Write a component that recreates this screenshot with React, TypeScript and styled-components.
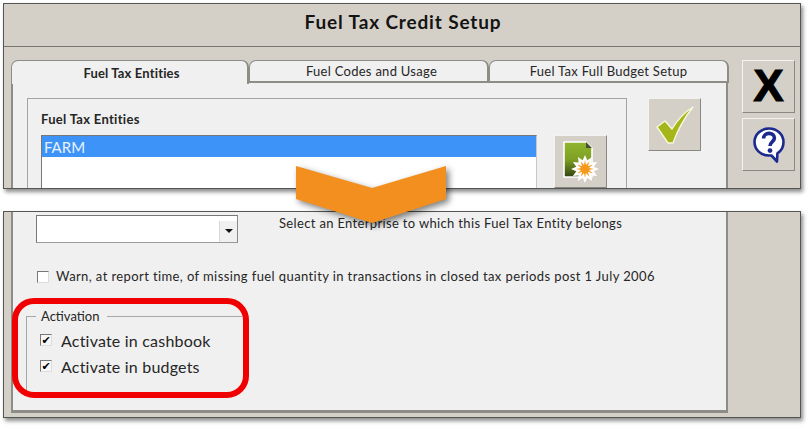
import * as React from "react";
import { createGlobalStyle, styled } from "styled-components";

const GlobalStyle = createGlobalStyle`
  html, body {
    margin: 0;
    padding: 0;
    background: #fff;
  }
  body {
    font-family: "Lato", "Open Sans", sans-serif;
    color: #262626;
  }
`;

// spiky burst used on the "new" document icon
const burst = (cx: number, cy: number, outer: number, inner: number, points: number) =>
  Array.from({ length: points * 2 }, (_, i) => {
    const r = i % 2 === 0 ? outer : inner;
    const a = (Math.PI * i) / points - Math.PI / 2;
    return `${(cx + r * Math.cos(a)).toFixed(1)},${(cy + r * Math.sin(a)).toFixed(1)}`;
  }).join(" ");

const CheckIcon = () => (
  <svg width="38" height="38" viewBox="0 0 38 38">
    <path
      d="M1 21 L9 15 L16 23 C22 13 29 6 37 1 C29 11 22 23 17 37 L12 37 Z"
      fill="#a5b61a"
      stroke="#f6f7dc"
      strokeWidth="1.4"
      strokeLinejoin="round"
    />
  </svg>
);

const NewDocIcon = () => (
  <svg width="36" height="42" viewBox="0 0 36 42">
    <defs>
      <linearGradient id="docFill" x1="0" y1="0" x2="0" y2="1">
        <stop offset="0" stopColor="#90b62e" />
        <stop offset="0.5" stopColor="#7f9f24" />
        <stop offset="1" stopColor="#2f4410" />
      </linearGradient>
    </defs>
    <path
      d="M1 1 H23 L29 7 V36 H1 Z"
      fill="url(#docFill)"
      stroke="#fff"
      strokeWidth="1.6"
      strokeLinejoin="round"
    />
    <path d="M23 1 L29 7 H23 Z" fill="#46512f" />
    <polygon points={burst(22, 28, 14, 9, 12)} fill="#fff" />
    <polygon points={burst(22, 28, 9, 4, 12)} fill="#f6981a" />
  </svg>
);

const HelpIcon = () => (
  <svg width="32" height="36" viewBox="0 0 32 36">
    <path
      d="M16 1.5 C7.8 1.5 1.5 7.6 1.5 15 C1.5 22.6 7.8 28.5 16 28.5 L18.5 28.5 L24 34.5 L24.4 26.4 C28.2 24 30.5 19.8 30.5 15 C30.5 7.6 24.2 1.5 16 1.5 Z"
      fill="#fff"
      stroke="#1c2a8e"
      strokeWidth="2.6"
      strokeLinejoin="round"
    />
    <path
      d="M10.6 11.5 C10.6 8.4 13 6.4 16 6.4 C19.2 6.4 21.4 8.2 21.4 11 C21.4 14.6 17 15 17 19"
      fill="none"
      stroke="#1c2a8e"
      strokeWidth="3.6"
    />
    <circle cx="17" cy="23.6" r="2.4" fill="#1c2a8e" />
  </svg>
);

export default function App() {
  return (
    <Page>
      <GlobalStyle />

      <TopPanel>
        <TitleBar>Fuel Tax Credit Setup</TitleBar>
        <TopBody>
          <TabArea>
            <TabStrip>
              <Tab $active $width={238} $shift={4}>Fuel Tax Entities</Tab>
              <Tab $width={240} $shift={6}>Fuel Codes and Usage</Tab>
              <Tab $width={240}>Fuel Tax Full Budget Setup</Tab>
            </TabStrip>
            <TabPage>
              <EntitiesGroup>
                <GroupTitle>Fuel Tax Entities</GroupTitle>
                <EntitiesRow>
                  <ListBox>
                    <ListItem>FARM</ListItem>
                  </ListBox>
                  <SquareButton>
                    <NewDocIcon />
                  </SquareButton>
                </EntitiesRow>
              </EntitiesGroup>
              <SquareButton>
                <CheckIcon />
              </SquareButton>
            </TabPage>
          </TabArea>
          <SideButtons>
            <SquareButton>
              <CloseGlyph>X</CloseGlyph>
            </SquareButton>
            <SquareButton>
              <HelpIcon />
            </SquareButton>
          </SideButtons>
        </TopBody>
      </TopPanel>

      <BottomPanel>
        <BottomPage>
          <EnterpriseRow>
            <ComboBox>
              <ComboArrow />
            </ComboBox>
            <HintText $spacing={0.34}>Select an Enterprise to which this Fuel Tax Entity belongs</HintText>
          </EnterpriseRow>
          <WarnRow>
            <CheckBox />
            <HintText $spacing={0.4}>
              Warn, at report time, of missing fuel quantity in transactions in closed tax periods post 1 July 2006
            </HintText>
          </WarnRow>
          <ActivationGroup>
            <ActivationLegend>Activation</ActivationLegend>
            <ActivationRow>
              <CheckBox $checked>✔</CheckBox>
              <ActivationLabel>Activate in cashbook</ActivationLabel>
            </ActivationRow>
            <ActivationRow>
              <CheckBox $checked>✔</CheckBox>
              <ActivationLabel>Activate in budgets</ActivationLabel>
            </ActivationRow>
            <RedHighlight />
          </ActivationGroup>
        </BottomPage>
      </BottomPanel>

      <ArrowMark viewBox="0 0 150 57" width="150" height="57">
        <polygon points="0,0 76,22 150,0 150,33 76,57 0,33" fill="#f28f1e" />
      </ArrowMark>
    </Page>
  );
}

const Page = styled.div`
  position: relative;
  width: 810px;
  height: 427px;
  padding: 3px 0 0 3px;
  box-sizing: border-box;
  overflow: hidden;
  display: flex;
  flex-direction: column;
  gap: 22px;
`;

const Panel = styled.section`
  width: 798px;
  box-sizing: border-box;
  border: 1px solid #555;
  background: #d4d0c8;
  box-shadow: 2px 3px 4px rgba(0, 0, 0, 0.45);
  overflow: hidden;
  flex: none;
`;

const TopPanel = styled(Panel)`
  height: 186px;
`;

const TitleBar = styled.header`
  height: 43px;
  box-sizing: border-box;
  padding: 0 0 7px 2px;
  border-bottom: 1px solid #77756f;
  display: flex;
  align-items: center;
  justify-content: center;
  font-size: 19px;
  font-weight: 700;
  letter-spacing: 0.85px;
  color: #141414;
`;

const TopBody = styled.div`
  display: flex;
  padding: 13px 0 0 7px;
  gap: 14px;
`;

const TabArea = styled.div`
  width: 717px;
  flex: none;
`;

const TabStrip = styled.div`
  display: flex;
  height: 23px;
  align-items: flex-start;
`;

const Tab = styled.div<{ $active?: boolean; $width: number; $shift?: number }>`
  width: ${(p) => p.$width}px;
  height: ${(p) => (p.$active ? 24 : 23)}px;
  flex: none;
  box-sizing: border-box;
  position: relative;
  z-index: ${(p) => (p.$active ? 1 : 0)};
  padding-left: ${(p) => p.$shift ?? 0}px;
  background: #f0f0f0;
  border: 1px solid #8e8c86;
  border-bottom: ${(p) => (p.$active ? "none" : "2px solid #8e8c86")};
  border-right-width: 2px;
  border-radius: 7px 7px 0 0;
  display: flex;
  align-items: center;
  justify-content: center;
  font-size: 13px;
  letter-spacing: ${(p) => (p.$active ? 0.15 : 0.28)}px;
  font-weight: ${(p) => (p.$active ? 700 : 400)};
`;

const TabPage = styled.div`
  background: #f0f0f0;
  height: 130px;
  box-sizing: border-box;
  border-left: 2px solid #8e8c86;
  border-right: 2px solid #8e8c86;
  padding: 15px 0 0 14px;
  display: flex;
  align-items: flex-start;
  gap: 21px;
`;

const EntitiesGroup = styled.div`
  width: 600px;
  height: 120px;
  flex: none;
  box-sizing: border-box;
  border: 1px solid #a4a4a4;
  padding: 12px 0 0 13px;
`;

const GroupTitle = styled.div`
  font-size: 13px;
  font-weight: 700;
  line-height: 17px;
  letter-spacing: 0.3px;
  margin-bottom: 7px;
`;

const EntitiesRow = styled.div`
  display: flex;
  align-items: flex-start;
  gap: 17px;
`;

const ListBox = styled.div`
  width: 496px;
  height: 60px;
  flex: none;
  box-sizing: border-box;
  background: #fff;
  border: 1px solid #77777a;
  border-right-color: #c8c8c8;
`;

const ListItem = styled.div`
  height: 21px;
  background: #3d93f7;
  color: #e8f2ff;
  font-size: 15px;
  line-height: 23px;
  padding-left: 2px;
`;

const SquareButton = styled.div`
  width: 53px;
  height: 53px;
  flex: none;
  box-sizing: border-box;
  background: #d4d0c8;
  border: 1px solid;
  border-color: #f4f3ef #8a8882 #8a8882 #f4f3ef;
  display: flex;
  align-items: center;
  justify-content: center;
`;

const SideButtons = styled.div`
  display: flex;
  flex-direction: column;
  gap: 5px;
`;

const CloseGlyph = styled.span`
  font-family: "Liberation Sans", sans-serif;
  font-size: 45px;
  font-weight: 700;
  line-height: 1;
  padding-bottom: 2px;
  color: #000;
  -webkit-text-stroke: 1.2px #000;
`;

const BottomPanel = styled(Panel)`
  height: 207px;
  padding-left: 7px;
`;

const BottomPage = styled.div`
  width: 717px;
  height: 201px;
  box-sizing: border-box;
  background: #f0f0f0;
  border-left: 2px solid #8e8c86;
  border-right: 2px solid #8e8c86;
  border-bottom: 3px solid #8e8c86;
  padding: 3px 0 0 23px;
`;

const EnterpriseRow = styled.div`
  display: flex;
  align-items: flex-start;
  gap: 41px;
`;

const ComboBox = styled.div`
  width: 202px;
  height: 28px;
  flex: none;
  box-sizing: border-box;
  background: #fff;
  border: 1px solid;
  border-color: #77777a #8a8a8a #9a9a9a #77777a;
  display: flex;
  justify-content: flex-end;
`;

const ComboArrow = styled.div`
  width: 18px;
  box-sizing: border-box;
  background: #f0f0f0;
  margin: 5px 0 0 0;
  border-left: 1px solid #d8d8d8;
  position: relative;

  &::after {
    content: "";
    position: absolute;
    left: 5px;
    top: 8px;
    border: 4px solid transparent;
    border-top: 4px solid #111;
    border-bottom: none;
  }
`;

const HintText = styled.span<{ $spacing: number }>`
  font-size: 13px;
  line-height: 17px;
  letter-spacing: ${(p) => p.$spacing}px;
  white-space: nowrap;
`;

const WarnRow = styled.div`
  display: flex;
  align-items: center;
  gap: 7px;
  margin: 25px 0 0 1px;
`;

const CheckBox = styled.span<{ $checked?: boolean }>`
  width: 12px;
  height: 12px;
  flex: none;
  box-sizing: border-box;
  background: ${(p) => (p.$checked ? "#f7f7f7" : "#fff")};
  border: 1px solid;
  border-color: #77777a #dcdcdc #dcdcdc #77777a;
  display: flex;
  align-items: center;
  justify-content: center;
  font-family: "DejaVu Sans", sans-serif;
  font-size: 11px;
  font-weight: 700;
  line-height: 1;
  color: #000;
`;

const ActivationGroup = styled.div`
  position: relative;
  width: 216px;
  height: 75px;
  box-sizing: border-box;
  margin: 31px 0 0 -10px;
  border-top: 1px solid #a8a8a8;
  border-left: 1px solid #a8a8a8;
  padding: 10px 0 0 13px;
`;

const ActivationLegend = styled.div`
  position: absolute;
  top: -9px;
  left: 9px;
  padding: 0 8px 0 5px;
  background: #f0f0f0;
  font-size: 13px;
  line-height: 17px;
`;

const ActivationRow = styled.div`
  display: flex;
  align-items: center;
  gap: 9px;
  height: 26px;
`;

const ActivationLabel = styled.span`
  font-size: 16px;
  letter-spacing: 0.2px;
  white-space: nowrap;
`;

const RedHighlight = styled.div`
  position: absolute;
  left: -15px;
  top: -19px;
  width: 237px;
  height: 100px;
  box-sizing: border-box;
  border: 6px solid #f00000;
  border-radius: 22px;
`;

const ArrowMark = styled.svg`
  position: absolute;
  left: 296px;
  top: 166px;
  overflow: visible;
  filter: drop-shadow(3px 3px 3px rgba(0, 0, 0, 0.5));
`;
